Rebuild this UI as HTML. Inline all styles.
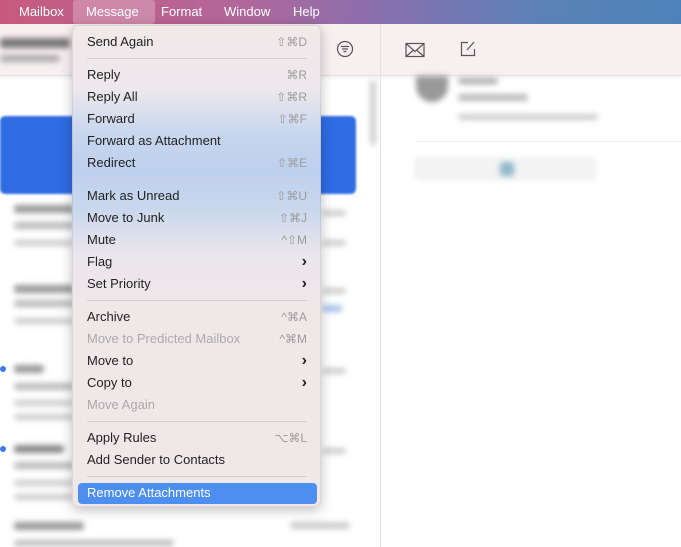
<!DOCTYPE html>
<html><head><meta charset="utf-8"><style>
*{margin:0;padding:0;box-sizing:border-box}
body{width:681px;height:547px;overflow:hidden;background:#fff;font-family:"Liberation Sans","DejaVu Sans",sans-serif;position:relative}
.bar{position:absolute;left:0;top:0;width:681px;height:24px;background:linear-gradient(90deg,#c85a7e 0%,#b2679a 35%,#8a6fae 55%,#5a82b8 80%,#4d82b8 100%)}
.bar span{position:absolute;top:4px;color:#fff;font-size:13px}
.mhi{position:absolute;left:73px;top:0;width:82px;height:24px;background:rgba(255,255,255,.25);border-radius:3px}
.tool{position:absolute;left:0;top:24px;width:681px;height:52px;background:#f8eff1;border-bottom:1px solid #eadde0;box-shadow:0 2px 4px rgba(0,0,0,.06)}
.div{position:absolute;left:380px;top:24px;width:1px;height:523px;background:#e6e0e2}
.blur{position:absolute;filter:blur(3px);background:#bbb;border-radius:3px}
.menu{position:absolute;left:72px;top:25px;width:249px;height:482px;border-radius:6px;
background:linear-gradient(180deg,#f1e9ea 0%,#eee8ec 13%,#c9d7ee 22%,#bdd0ee 30%,#c9d7ed 38%,#ebe6ec 48%,#f0e7e8 60%,#f0e7e8 100%);
box-shadow:0 3px 12px rgba(0,0,0,.25);border:1px solid rgba(0,0,0,.08)}
.it{position:absolute;left:14px;font-size:13px;color:#222;width:220px;height:22px;line-height:22px}
.it.d{color:#aaa}
.it b{position:absolute;right:0;top:0;font-weight:normal;color:#9c9c9c;font-size:12px}
.it i{position:absolute;right:0;top:0;font-style:normal;color:#222;font-size:16px;font-weight:bold}
.sep{position:absolute;left:14px;width:220px;height:1px;background:#d6cfd1}
.hl{position:absolute;left:5px;top:457px;width:239px;height:21px;background:#4c8ff1;border-radius:4px}
</style></head><body>
<div class="bar"><div class="mhi"></div>
<span style="left:19px">Mailbox</span><span style="left:86px">Message</span><span style="left:161px">Format</span><span style="left:224px">Window</span><span style="left:293px">Help</span></div>
<div class="tool"></div>
<div class="div"></div>
<div class="blur" style="left:0;top:38px;width:70px;height:10px;background:#777"></div>
<div class="blur" style="left:0;top:55px;width:60px;height:7px;background:#aaa"></div>
<div class="blur" style="left:370px;top:80px;width:6px;height:65px;background:#ccc"></div>
<div style="position:absolute;left:0;top:116px;width:356px;height:78px;background:#2f6ce3;border-radius:5px;filter:blur(1px)"></div>
<div class="blur" style="left:14px;top:205px;width:60px;height:8px;background:#999"></div>
<div class="blur" style="left:14px;top:222px;width:60px;height:7px"></div>
<div class="blur" style="left:14px;top:240px;width:60px;height:6px;background:#ccc"></div>
<div class="blur" style="left:322px;top:210px;width:24px;height:6px;background:#ccc"></div>
<div class="blur" style="left:322px;top:240px;width:24px;height:6px;background:#ccc"></div>
<div class="blur" style="left:14px;top:285px;width:60px;height:8px;background:#999"></div>
<div class="blur" style="left:14px;top:300px;width:60px;height:7px"></div>
<div class="blur" style="left:14px;top:318px;width:60px;height:6px;background:#ccc"></div>
<div class="blur" style="left:322px;top:288px;width:24px;height:6px;background:#ccc"></div>
<div class="blur" style="left:322px;top:305px;width:20px;height:7px;background:#a8c0e8"></div>
<div class="blur" style="left:14px;top:365px;width:30px;height:8px;background:#999"></div>
<div class="blur" style="left:14px;top:383px;width:60px;height:7px"></div>
<div class="blur" style="left:14px;top:400px;width:60px;height:6px;background:#ccc"></div>
<div class="blur" style="left:14px;top:414px;width:60px;height:6px;background:#ccc"></div>
<div class="blur" style="left:322px;top:368px;width:24px;height:6px;background:#ccc"></div>
<div class="blur" style="left:14px;top:445px;width:50px;height:8px;background:#888"></div>
<div class="blur" style="left:14px;top:462px;width:60px;height:7px"></div>
<div class="blur" style="left:14px;top:480px;width:60px;height:6px;background:#ccc"></div>
<div class="blur" style="left:14px;top:494px;width:60px;height:6px;background:#ccc"></div>
<div class="blur" style="left:322px;top:448px;width:24px;height:6px;background:#ccc"></div>
<div class="blur" style="left:14px;top:522px;width:70px;height:8px;background:#999"></div>
<div class="blur" style="left:14px;top:540px;width:160px;height:6px"></div>
<div class="blur" style="left:290px;top:522px;width:60px;height:7px;background:#ccc"></div>
<div style="position:absolute;left:0;top:366px;width:6px;height:6px;border-radius:50%;background:#3a7ae6"></div>
<div style="position:absolute;left:0;top:446px;width:6px;height:6px;border-radius:50%;background:#3a7ae6"></div>
<div class="blur" style="left:416px;top:76px;width:32px;height:26px;border-radius:0 0 16px 16px;background:#999"></div>
<div class="blur" style="left:458px;top:78px;width:40px;height:6px;background:#aaa"></div>
<div class="blur" style="left:458px;top:94px;width:70px;height:7px;background:#bbb"></div>
<div class="blur" style="left:458px;top:114px;width:140px;height:6px;background:#ccc"></div>
<div style="position:absolute;left:415px;top:141px;width:266px;height:1px;background:#eee"></div>
<div class="blur" style="left:415px;top:158px;width:180px;height:22px;background:#f3f3f3;border:1px solid #e4e4e4"></div>
<div class="blur" style="left:500px;top:162px;width:14px;height:14px;background:#8fb8c8"></div>
<svg style="position:absolute;left:336px;top:40px" width="18" height="18" viewBox="0 0 18 18" fill="none" stroke="#555" stroke-width="1.2"><circle cx="9" cy="9" r="7.5"/><path d="M5 6.5h8M6 9h6M7.5 11.5h3"/></svg>
<svg style="position:absolute;left:405px;top:42px" width="20" height="16" viewBox="0 0 20 16" fill="none" stroke="#555" stroke-width="1.2"><rect x="1" y="1.5" width="18" height="13"/><path d="M1 1.5l9 8 9-8M1 14.5l7-6M19 14.5l-7-6"/></svg>
<svg style="position:absolute;left:459px;top:40px" width="18" height="18" viewBox="0 0 18 18" fill="none" stroke="#555" stroke-width="1.2"><path d="M9 2.5H2.5v13h13V9"/><path d="M8 10l7-8"/></svg>
<div class="menu">
<div class="hl"></div>
<div class="it" style="top:5px">Send Again<b>⇧⌘D</b></div>
<div class="sep" style="top:32px"></div>
<div class="it" style="top:38px">Reply<b>⌘R</b></div>
<div class="it" style="top:60px">Reply All<b>⇧⌘R</b></div>
<div class="it" style="top:82px">Forward<b>⇧⌘F</b></div>
<div class="it" style="top:104px">Forward as Attachment</div>
<div class="it" style="top:126px">Redirect<b>⇧⌘E</b></div>
<div class="sep" style="top:153px"></div>
<div class="it" style="top:159px">Mark as Unread<b>⇧⌘U</b></div>
<div class="it" style="top:181px">Move to Junk<b>⇧⌘J</b></div>
<div class="it" style="top:203px">Mute<b>^⇧M</b></div>
<div class="it" style="top:225px">Flag<i>›</i></div>
<div class="it" style="top:247px">Set Priority<i>›</i></div>
<div class="sep" style="top:274px"></div>
<div class="it" style="top:280px">Archive<b>^⌘A</b></div>
<div class="it d" style="top:302px">Move to Predicted Mailbox<b>^⌘M</b></div>
<div class="it" style="top:324px">Move to<i>›</i></div>
<div class="it" style="top:346px">Copy to<i>›</i></div>
<div class="it d" style="top:368px">Move Again</div>
<div class="sep" style="top:395px"></div>
<div class="it" style="top:401px">Apply Rules<b>⌥⌘L</b></div>
<div class="it" style="top:423px">Add Sender to Contacts</div>
<div class="sep" style="top:450px"></div>
<div class="it" style="top:456px;color:#fff">Remove Attachments</div>
</div>
</body></html>
